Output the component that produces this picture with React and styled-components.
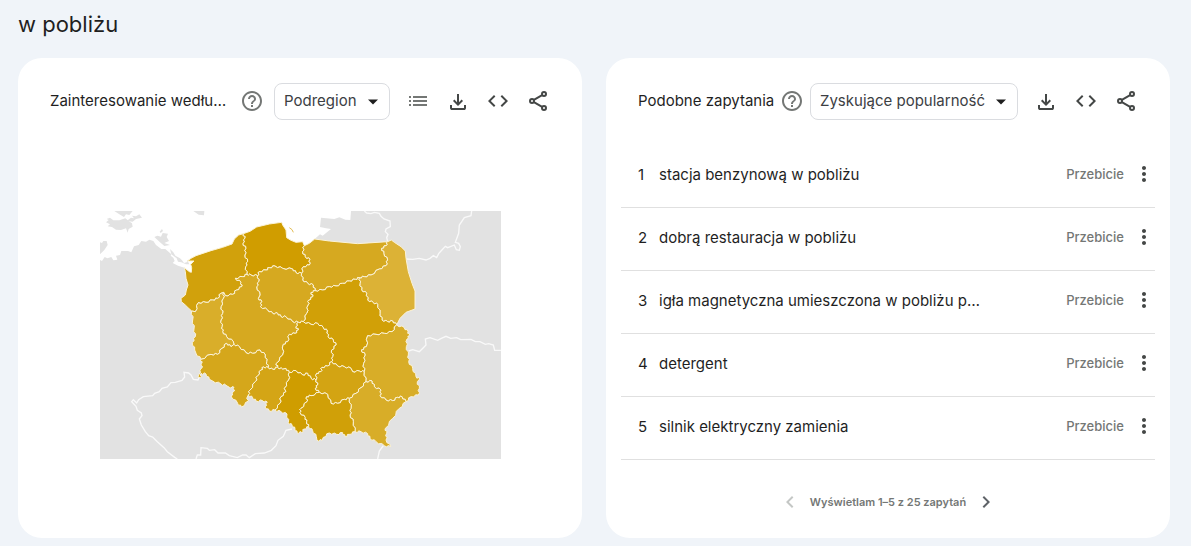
import React from "react";
import styled, { createGlobalStyle } from 'styled-components';

const GlobalStyle = createGlobalStyle`
  * {
    box-sizing: border-box;
  }
  body {
    margin: 0;
    background: #f0f4f9;
    font-family: Inter, "Open Sans", sans-serif;
    color: #1f1f1f;
  }
`;

const Page = styled.main`
  padding: 8px 21px 8px 18px;
`;

const PageTitle = styled.h1`
  margin: 0 0 18px;
  font-size: 22px;
  line-height: 32px;
  font-weight: 400;
`;

const Cards = styled.div`
  display: grid;
  grid-template-columns: minmax(0, 1fr) minmax(0, 1fr);
  gap: 24px;
`;

const Card = styled.section`
  display: flex;
  flex-direction: column;
  min-height: 480px;
  background: #fff;
  border-radius: 24px;
`;

const CardHeader = styled.header`
  display: flex;
  align-items: flex-start;
  padding: 25px 24px 25px 32px;
`;

const CardTitle = styled.h2`
  flex: 0 1 auto;
  min-width: 0;
  max-width: 184px;
  margin: 0;
  overflow: hidden;
  white-space: nowrap;
  text-overflow: ellipsis;
  font-size: 15px;
  line-height: 36px;
  font-weight: 400;
`;

const IconButton = styled.button`
  display: flex;
  flex: none;
  align-items: center;
  justify-content: center;
  width: ${props => props.$width || 40}px;
  height: 36px;
  padding: 0;
  border: 0;
  background: none;
  color: ${props => props.$color || '#444746'};
  cursor: pointer;
`;

const HelpButton = styled(IconButton)`
  margin: 0 4px 0 6px;
`;

const SelectBox = styled.div`
  display: flex;
  flex: none;
  position: relative;
  align-items: center;
  margin: 0 8px 0 auto;

  svg {
    position: absolute;
    right: 7px;
    pointer-events: none;
  }
`;

const Select = styled.select`
  appearance: none;
  height: 37px;
  padding: 0 32px 2px 9px;
  border: 1px solid #dadce0;
  border-radius: 8px;
  background: #fff;
  color: #3c4043;
  font-family: inherit;
  font-size: 15px;
`;

const MapArea = styled.div`
  display: flex;
  flex: 1;
  align-items: flex-start;
  justify-content: center;
  padding: 66px 24px 24px;

  svg {
    width: 100%;
    max-width: 401px;
    height: auto;
  }
`;

const QueryList = styled.ol`
  margin: 0;
  padding: 0 15px 0;
  list-style: none;
`;

const QueryRow = styled.li`
  display: flex;
  align-items: center;
  height: 63px;
  padding: 0 0 4px 17px;
  border-bottom: 1px solid #e0e0e0;
  font-size: 15px;
`;

const Rank = styled.span`
  flex: none;
  width: 21px;
`;

const Query = styled.a`
  flex: 0 1 326px;
  overflow: hidden;
  color: inherit;
  text-decoration: none;
  text-overflow: ellipsis;
  white-space: nowrap;
`;

const Growth = styled.span`
  margin: 0 8px 0 auto;
  color: #747775;
  font-size: 13px;
  font-weight: 500;
`;

const MoreButton = styled(IconButton)`
  width: 24px;
  margin-right: -1px;
`;

const Pagination = styled.nav`
  display: flex;
  align-items: center;
  justify-content: center;
  padding: 24px 0 18px;
  gap: 8px;
  color: #747775;
  font-size: 11px;
  line-height: 24px;
  font-weight: 600;
`;

const Icon = ({ d, size = 24 }) => (
  <svg width={size} height={size} viewBox="0 0 24 24" fill="currentColor" aria-hidden="true">
    <path d={d} />
  </svg>
);

const icons = {
  help: 'M11 18h2v-2h-2v2zm1-16C6.48 2 2 6.48 2 12s4.48 10 10 10 10-4.48 10-10S17.52 2 12 2zm0 18c-4.41 0-8-3.59-8-8s3.59-8 8-8 8 3.59 8 8-3.59 8-8 8zm0-14c-2.21 0-4 1.79-4 4h2c0-1.1.9-2 2-2s2 .9 2 2c0 2-3 1.75-3 5h2c0-2.25 3-2.5 3-5 0-2.21-1.79-4-4-4z',
  arrow: 'M6 9l6 6 6-6z',
  list: 'M3 7h2v2H3zM3 11h2v2H3zM3 15h2v2H3zM7 7h14v2H7zM7 11h14v2H7zM7 15h14v2H7z',
  download: 'M12 17l-5-5 1.4-1.45 2.6 2.6V5h2v8.15l2.6-2.6L17 12l-5 5zM6 21q-.83 0-1.41-.59T4 19v-3h2v3h12v-3h2v3q0 .83-.59 1.41T18 21z',
  code: 'M9.4 16.6L4.8 12l4.6-4.6L8 6l-6 6 6 6 1.4-1.4zm5.2 0l4.6-4.6-4.6-4.6L16 6l6 6-6 6-1.4-1.4z',
  more: 'M12 8c1.1 0 2-.9 2-2s-.9-2-2-2-2 .9-2 2 .9 2 2 2zm0 2c-1.1 0-2 .9-2 2s.9 2 2 2 2-.9 2-2-.9-2-2-2zm0 6c-1.1 0-2 .9-2 2s.9 2 2 2 2-.9 2-2-.9-2-2-2z',
  prev: 'M15.41 7.41L14 6l-6 6 6 6 1.41-1.41L10.83 12z',
  next: 'M10 6L8.59 7.41 13.17 12l-4.58 4.59L10 18l6-6z'
};

const ShareIcon = () => (
  <svg width="24" height="24" viewBox="0 0 24 24" fill="none" stroke="currentColor" strokeWidth="2" aria-hidden="true">
    <circle cx="18" cy="5" r="2" />
    <circle cx="6" cy="12" r="2" />
    <circle cx="18" cy="19" r="2" />
    <path d="M7.9 10.9l8.2-4.8M7.9 13.1l8.2 4.8" />
  </svg>
);

// border segments, each one is shared by the regions on both sides
const arcs = {
  KA: '287,318 276,308 268,300 256,290 255,280 268,270 271,255 276,240 270,220 268,200 265,188 280,200 286,202 287,188 284,178 294,168 274,168 285,160 300,152 345,137 380,127 408,117 415,102 428,90 442,86',
  AB: '442,86 462,79 482,66 520,57 557,52 560,60 570,75 572,98 585,106 600,112 620,110 625,122',
  BC: '625,122 640,115 656,102 700,108 785,116 875,110',
  CD: '875,110 886,105 895,112 915,125 928,138 930,160 937,200 948,235 957,258 957,312 930,322 912,340 902,360',
  DE: '902,360 925,368 936,380 940,392 933,402 931,425 937,450 938,470 950,490 960,515 971,522 964,530 970,550 967,570 945,575 930,590',
  EF: '930,590 910,610 890,640 868,670 872,685 870,705 884,725 865,722 840,710 822,700 815,686 795,680 777,680',
  FG: '777,680 760,688 747,695 740,683 722,688 700,684 682,697 678,706 663,706 661,695 650,677 638,665',
  GH: '638,665 625,672 617,682 603,683 597,672 588,660 577,653 573,627 555,620 537,615',
  HI: '537,615 520,618 507,605 514,592 500,587 480,588 470,578 457,570',
  IJ: '457,570 452,580 458,588 436,606 425,595 405,573 413,560 414,547 400,547 390,541 375,537 350,528 340,523 330,507 315,505 313,518 306,517 308,508 317,490 317,475 315,463',
  JK: '315,463 300,445 296,435 289,412 298,395 294,372 290,345 287,318',
  Aa: '442,86 447,100 441,115 450,130 447,150 455,170 449,185 453,208',
  ab: '453,208 465,210 485,212',
  bc: '485,212 490,200 510,195 520,188 537,183 560,190 590,192 600,203 617,205',
  Bc: '625,122 620,140 628,155 642,163 640,180 622,185 617,205',
  cd: '617,205 620,225 635,235 652,240 657,257',
  de: '657,257 680,255 700,245 720,243 740,235 760,228 778,223 790,218',
  Ce: '875,110 870,122 857,130 864,145 875,165 870,182 850,192 825,210 805,215 790,218',
  eD: '790,218 792,235 797,255 812,265 815,285 832,293 845,298 852,325 858,345 875,350 890,348 902,360',
  df: '657,257 645,262 650,275 638,285 636,300 632,325 622,350',
  fg: '622,350 607,352',
  bg: '485,212 488,230 482,245 492,270 487,280 497,290 493,305 515,315 530,325 545,325 555,335 570,335 590,350 607,352',
  Kh: '287,318 298,320 307,293 330,292 350,285 365,280 375,265 383,262',
  ha: '383,262 388,272 410,268 422,255 437,245 435,232 418,220 440,215 453,208',
  hi: '383,262 382,280 375,305 380,325 375,345 378,365 380,380 392,395 412,410 414,418',
  Ji: '315,463 345,448 365,448 378,430 392,415 405,425 414,418',
  ij: '414,418 430,425 450,443 470,445 492,435 508,450 512,470 517,488',
  Ij: '457,570 462,555 478,530 485,512 495,495 503,486 517,488',
  jk: '517,488 530,493 545,487',
  gk: '607,352 600,365 607,375 597,385 580,388 575,410 562,418 560,450 541,475 545,487',
  kl: '545,487 560,492 570,490 580,502',
  lH: '580,502 578,525 565,550 570,560 555,575 552,595 537,615',
  lm: '580,502 600,497 620,510 635,505 645,520 660,525',
  fn: '622,350 645,358 665,355 682,368 694,378 696,395 712,405 720,420 707,435 710,455 707,470',
  nm: '707,470 695,483 678,487 675,500 662,505 660,525',
  np: '707,470 725,483 745,485 765,490 770,500 790,498 805,500',
  Dp: '902,360 888,380 865,385 840,388 815,392 811,425 796,435 808,450 803,475 805,500',
  pq: '805,500 810,530',
  qE: '810,530 828,528 835,545 855,555 852,572 870,585 890,587 905,577 918,575 930,590',
  qr: '810,530 795,548 780,565 760,580',
  rF: '760,580 765,610 762,630 772,650 777,680',
  ms: '660,525 665,540 658,550 670,562',
  sr: '670,562 695,568 705,595 725,595 745,583 760,580',
  sG: '670,562 645,572 632,575 633,590 615,610 612,622 628,638 632,650 638,665'
};

const smooth = ['AB', 'BC', 'CD', 'KA'];

// land borders are uneven, so every step gets two small bends
const bend = (name) => {
  const pts = arcs[name].split(' ').map(p => p.split(',').map(Number));
  if (smooth.includes(name)) {
    return pts;
  }
  const out = [pts[0]];
  for (let i = 1; i < pts.length; i++) {
    const [x0, y0] = pts[i - 1];
    const [x1, y1] = pts[i];
    const dx = x1 - x0;
    const dy = y1 - y0;
    const len = Math.hypot(dx, dy);
    const k = 2.5 / len;
    if (len > 12) {
      out.push([x0 + dx * 0.35 - dy * k, y0 + dy * 0.35 + dx * k]);
      out.push([x0 + dx * 0.65 + dy * k, y0 + dy * 0.65 - dx * k]);
    }
    out.push(pts[i]);
  }
  return out;
};

const ring = (names) => names.split(' ').flatMap(name => (
  name[0] === '-' ? bend(name.slice(1)).reverse() : bend(name)
)).map(p => p.join(',')).join(' ');

const regions = [
  { name: 'zachodniopomorskie', fill: '#d1a10c', border: 'KA Aa -ha -Kh' },
  { name: 'pomorskie', fill: '#d09d00', border: 'AB Bc -bc -ab -Aa' },
  { name: 'warmińsko-mazurskie', fill: '#d6a920', border: 'BC Ce -de -cd -Bc' },
  { name: 'podlaskie', fill: '#dcb236', border: 'CD -eD -Ce' },
  { name: 'mazowieckie', fill: '#d1a007', border: 'de eD Dp -np -fn -df' },
  { name: 'kujawsko-pomorskie', fill: '#d6a920', border: 'bc cd df fg -bg' },
  { name: 'wielkopolskie', fill: '#d6a920', border: 'ha ab bg gk -jk -ij -hi' },
  { name: 'lubuskie', fill: '#d9ae2a', border: 'Kh hi -Ji JK' },
  { name: 'dolnośląskie', fill: '#d5a71b', border: 'Ji ij -Ij IJ' },
  { name: 'opolskie', fill: '#d4a516', border: 'jk kl lH HI Ij' },
  { name: 'łódzkie', fill: '#d1a007', border: 'fn nm -lm -kl -gk -fg' },
  { name: 'śląskie', fill: '#cf9d00', border: 'lm ms sG GH -lH' },
  { name: 'świętokrzyskie', fill: '#d3a413', border: 'np pq qr -sr -ms -nm' },
  { name: 'lubelskie', fill: '#d8ad28', border: 'DE -qE -pq -Dp' },
  { name: 'podkarpackie', fill: '#d8ad28', border: 'qE EF -rF -qr' },
  { name: 'małopolskie', fill: '#d0a008', border: 'sr rF FG -sG' }
];

const islands = [
  '12,112 18,114 22,108 32,108 35,120 25,135 12,148',
  '30,52 38,45 32,42 42,38 52,46 70,46 88,40 98,48 108,55 110,65 98,72 95,83 90,70 75,75 60,74 48,66 35,64 42,58',
  '55,18 110,18 100,30 90,28 84,36 70,28',
  '92,48 105,38 114,40 108,32 120,34 130,28 138,38 120,42 110,50',
  '292,18 325,18 324,31 308,29',
  '175,96 184,92 195,95 200,84 216,86 212,96 219,108 205,114 222,120 205,123 192,112',
  '191,80 198,72 201,78 194,84'
];

const sea = '12,18 765,18 763,45 748,44 730,37 715,42 675,38 672,66 690,70 705,72 690,84 680,92 672,88 656,102 640,115 625,135 560,140 300,200 284,204 265,188 258,186 246,182 230,174 236,168 232,158 224,152 226,148 208,132 196,132 180,120 172,108 160,104 150,110 136,108 128,120 114,124 106,142 96,138 76,138 72,150 60,152 64,164 52,166 46,156 34,160 26,156 18,168 12,165';

const usedom = '222,132 232,142 238,152 252,160 258,166 264,174 272,172 274,166 280,178 270,178 256,172 246,170 242,160 226,148';

const neighbours = [
  '805,18 812,24 825,26 835,22 850,25 855,34 864,42 882,48 883,65 870,72 868,80 876,88 872,98 875,110',
  '1127,18 1125,32 1105,38 1090,60 1088,85 1078,112 1088,115 1093,125 1090,136 1081,134 1075,120 1055,128 1048,124 1035,138 1028,146 1022,158 1012,152 1002,160 990,165 970,160 950,163 930,162',
  '938,438 950,434 970,440 982,428 990,420 988,402 1002,398 1025,406 1036,400 1050,394 1064,400 1082,398 1094,404 1125,403 1138,410 1152,410 1168,418 1178,416 1192,420 1196,436 1215,436',
  '862,722 850,738 845,762',
  '315,505 306,525 292,523 285,510 278,504 264,502 266,516 258,526 238,532 225,533 214,546 198,550 190,560 176,565 170,572 142,575 128,584 122,594 112,584 107,590 120,604 124,616 136,624 138,632 130,642 136,660 148,680 158,692 170,696 184,710 204,728 214,740 236,757 244,762',
  '300,762 304,750 314,750 315,728 334,730 340,736 356,734 366,744 388,744 400,752 424,758 440,750 450,750 460,758 478,746 505,744 526,736 540,722 546,706 562,694 570,676 588,672'
];

const RegionMap = () => (
  <svg viewBox="12 18 1203 744" role="img" aria-label="Polska">
    <rect x="12" y="18" width="1203" height="744" fill="#e2e2e2" />
    <polygon points={sea} fill="#fff" />
    <g fill="#e2e2e2">
      {islands.map(points => <polygon key={points} points={points} />)}
      <polygon points={usedom} />
    </g>
    <g fill="none" stroke="#fff" strokeWidth="4" strokeOpacity="0.8">
      {neighbours.map(points => <polyline key={points} points={points} />)}
    </g>
    <g stroke="#fbf3d8" strokeWidth="3" strokeLinejoin="round">
      {regions.map(region => (
        <polygon key={region.name} points={ring(region.border)} fill={region.fill} />
      ))}
    </g>
    <path d="M580 68l8 6 4 8" fill="none" stroke="#e3bd55" strokeWidth="3" />
  </svg>
);

const queries = [
  'stacja benzynową w pobliżu',
  'dobrą restauracja w pobliżu',
  'igła magnetyczna umieszczona w pobliżu punktu',
  'detergent',
  'silnik elektryczny zamienia'
];

const Dropdown = ({ label, value }) => (
  <SelectBox>
    <Select aria-label={label} defaultValue={value}>
      <option>{value}</option>
    </Select>
    <Icon d={icons.arrow} size={20} />
  </SelectBox>
);

const Help = () => (
  <HelpButton $width={24} $color="#747775" aria-label="Pomoc">
    <Icon d={icons.help} />
  </HelpButton>
);

const Actions = () => (
  <>
    <IconButton aria-label="Pobierz"><Icon d={icons.download} /></IconButton>
    <IconButton aria-label="Umieść"><Icon d={icons.code} /></IconButton>
    <IconButton aria-label="Udostępnij"><ShareIcon /></IconButton>
  </>
);

export default function App() {
  return (
    <Page>
      <GlobalStyle />
      <PageTitle>w pobliżu</PageTitle>
      <Cards>
        <Card>
          <CardHeader>
            <CardTitle>Zainteresowanie według podregionu</CardTitle>
            <Help />
            <Dropdown label="Obszar" value="Podregion" />
            <IconButton $color="#747775" aria-label="Lista"><Icon d={icons.list} /></IconButton>
            <Actions />
          </CardHeader>
          <MapArea>
            <RegionMap />
          </MapArea>
        </Card>
        <Card>
          <CardHeader>
            <CardTitle>Podobne zapytania</CardTitle>
            <Help />
            <Dropdown label="Sortowanie" value="Zyskujące popularność" />
            <Actions />
          </CardHeader>
          <QueryList>
            {queries.map((query, i) => (
              <QueryRow key={query}>
                <Rank>{i + 1}</Rank>
                <Query href="#">{query}</Query>
                <Growth>Przebicie</Growth>
                <MoreButton aria-label="Więcej"><Icon d={icons.more} /></MoreButton>
              </QueryRow>
            ))}
          </QueryList>
          <Pagination aria-label="Strony">
            <IconButton $width={24} $color="#c4c7c5" aria-label="Poprzednia" disabled><Icon d={icons.prev} /></IconButton>
            <span>Wyświetlam 1–5 z 25 zapytań</span>
            <IconButton $width={24} $color="#5f6368" aria-label="Następna"><Icon d={icons.next} /></IconButton>
          </Pagination>
        </Card>
      </Cards>
    </Page>
  );
}
